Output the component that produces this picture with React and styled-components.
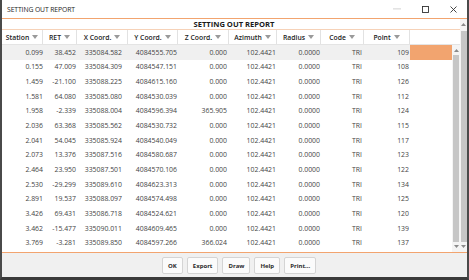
import React from 'react';
import styled, { createGlobalStyle } from 'styled-components';

const GlobalStyle = createGlobalStyle`
  html, body {
    margin: 0;
    padding: 0;
    background: #ffffff;
  }
  * {
    box-sizing: border-box;
  }
`;

const ORANGE = '#f2a46f';

const columns = [
    { key: 'station', label: 'Station', width: 41, pad: 0 },
    { key: 'ret', label: 'RET', width: 34, pad: 1 },
    { key: 'x', label: 'X Coord.', width: 51, pad: 6 },
    { key: 'y', label: 'Y Coord.', width: 50, pad: 1 },
    { key: 'z', label: 'Z Coord.', width: 51, pad: 2 },
    { key: 'az', label: 'Azimuth', width: 48, pad: 1 },
    { key: 'radius', label: 'Radius', width: 44, pad: 1 },
    { key: 'code', label: 'Code', width: 43, pad: 2 },
    { key: 'point', label: 'Point', width: 46, pad: 1 },
];

const raw = [
    ['0.099', '38.452', '335084.582', '4084555.705', '0.000', '109'],
    ['0.155', '47.009', '335084.309', '4084547.151', '0.000', '108'],
    ['1.459', '-21.100', '335088.225', '4084615.160', '0.000', '126'],
    ['1.581', '64.080', '335085.080', '4084530.039', '0.000', '112'],
    ['1.958', '-2.339', '335088.004', '4084596.394', '365.905', '124'],
    ['2.036', '63.368', '335085.562', '4084530.732', '0.000', '115'],
    ['2.041', '54.045', '335085.924', '4084540.049', '0.000', '117'],
    ['2.073', '13.376', '335087.516', '4084580.687', '0.000', '123'],
    ['2.464', '23.950', '335087.501', '4084570.106', '0.000', '122'],
    ['2.530', '-29.299', '335089.610', '4084623.313', '0.000', '134'],
    ['2.891', '19.537', '335088.097', '4084574.498', '0.000', '125'],
    ['3.426', '69.431', '335086.718', '4084524.621', '0.000', '120'],
    ['3.462', '-15.477', '335090.011', '4084609.465', '0.000', '139'],
    ['3.769', '-3.281', '335089.850', '4084597.266', '366.024', '137'],
];

const rows = raw.map(r => ({
    station: r[0],
    ret: r[1],
    x: r[2],
    y: r[3],
    z: r[4],
    az: '102.4421',
    radius: '0.0000',
    code: 'TRI',
    point: r[5],
}));

const Window = styled.div`
  width: 469px;
  height: 280px;
  display: flex;
  flex-direction: column;
  background: #ffffff;
  border-left: 2px solid #4a4a4a;
  border-right: 2px solid #4a4a4a;
  border-bottom: 3px solid #3a3a3a;
  font-family: "Open Sans", "Noto Sans", sans-serif;
  overflow: hidden;
`;

const TitleBar = styled.div`
  height: 18px;
  display: flex;
  align-items: center;
  padding-left: 5px;
  background: #ffffff;
`;

const TitleText = styled.div`
  flex: 1;
  font-size: 6.8px;
  color: #1e1e1e;
  letter-spacing: -0.1px;
`;

const Controls = styled.div`
  display: flex;
  align-items: center;
  height: 100%;
`;

const ControlBtn = styled.div`
  width: 28px;
  height: 100%;
  display: flex;
  align-items: center;
  justify-content: center;
`;

const Panel = styled.div`
  height: 235px;
  display: flex;
  border-top: 1px solid ${ORANGE};
  border-bottom: 1px solid ${ORANGE};
`;

const GridArea = styled.div`
  flex: 1;
  display: flex;
  flex-direction: column;
  min-width: 0;
`;

const Subtitle = styled.div`
  height: 10px;
  font-size: 7.6px;
  font-weight: 700;
  color: #1a1a1a;
  text-align: center;
  line-height: 10px;
  padding-left: 6px;
`;

const HeaderRow = styled.div`
  height: 16px;
  display: flex;
  border-top: 1px solid #f6d2b8;
  border-bottom: 1px solid #e4e4e4;
`;

const HeaderCell = styled.div`
  flex: 0 0 ${p => p.$w}px;
  display: flex;
  align-items: center;
  justify-content: center;
  gap: 3px;
  font-size: 6.8px;
  font-weight: 600;
  color: #222;
  border-right: 1px solid #e2e2e2;
  &:last-child {
    flex: 1;
    border-right: none;
  }
`;

const BodyArea = styled.div`
  flex: 1;
  display: flex;
  min-height: 0;
`;

const Rows = styled.div`
  flex: 1;
  overflow: hidden;
`;

const Row = styled.div`
  height: 14.65px;
  display: flex;
  align-items: center;
  background: ${p => (p.$selected ? '#f0f0f0' : '#ffffff')};
`;

const Cell = styled.div`
  flex: 0 0 ${p => p.$w}px;
  text-align: right;
  padding-right: ${p => p.$pad}px;
  font-size: 6.9px;
  color: #444;
  white-space: nowrap;
`;

const FillCell = styled.div`
  flex: 1;
  align-self: stretch;
  background: ${p => (p.$selected ? ORANGE : 'transparent')};
`;

const ScrollBar = styled.div`
  flex: 0 0 ${p => p.$w}px;
  display: flex;
  flex-direction: column;
  align-items: center;
  background: #f4f4f4;
  padding: 2px 0;
`;

const Arrow = styled.div`
  height: 7px;
  display: flex;
  align-items: center;
  justify-content: center;
`;

const Thumb = styled.div`
  flex: 1;
  width: 6px;
  background: #c6c6c6;
  margin: ${p => p.$m};
`;

const ButtonBar = styled.div`
  flex: 1;
  display: flex;
  justify-content: center;
  align-items: flex-start;
  gap: 4px;
  padding: 4px 0 0 9px;
  background: #f0f0f0;
`;

const Button = styled.button`
  height: 17px;
  padding: 0 5px;
  min-width: 21px;
  font-family: "Open Sans", "Noto Sans", sans-serif;
  font-size: 6px;
  font-weight: 700;
  color: #2a2a2a;
  background: #fbfbfb;
  border: 1px solid #d4d4d4;
  border-radius: 2px;
`;

const SortIcon = () => (
    <svg width="6" height="4" viewBox="0 0 6 4">
        <polygon points="0,0 6,0 3,4" fill="#9a9a9a" />
    </svg>
);

const UpArrow = () => (
    <svg width="5" height="3" viewBox="0 0 5 3">
        <polygon points="0,3 5,3 2.5,0" fill="#8a8a8a" />
    </svg>
);

const DownArrow = () => (
    <svg width="5" height="3" viewBox="0 0 5 3">
        <polygon points="0,0 5,0 2.5,3" fill="#8a8a8a" />
    </svg>
);

export default function App() {
    return (
        <>
            <GlobalStyle />
            <Window>
                <TitleBar>
                    <TitleText>SETTING OUT REPORT</TitleText>
                    <Controls>
                        <ControlBtn>
                            <svg width="8" height="2" viewBox="0 0 8 2">
                                <rect x="0" y="0.5" width="8" height="0.8" fill="#c8c8c8" />
                            </svg>
                        </ControlBtn>
                        <ControlBtn>
                            <svg width="7" height="7" viewBox="0 0 7 7">
                                <rect x="0.5" y="0.5" width="6" height="6" fill="none" stroke="#333" strokeWidth="0.9" />
                            </svg>
                        </ControlBtn>
                        <ControlBtn>
                            <svg width="7" height="7" viewBox="0 0 7 7">
                                <path d="M0.5 0.5 L6.5 6.5 M6.5 0.5 L0.5 6.5" stroke="#333" strokeWidth="0.9" />
                            </svg>
                        </ControlBtn>
                    </Controls>
                </TitleBar>

                <Panel>
                    <GridArea>
                        <Subtitle>SETTING OUT REPORT</Subtitle>
                        <HeaderRow>
                            {columns.map(c => (
                                <HeaderCell key={c.key} $w={c.width}>
                                    {c.label}
                                    <SortIcon />
                                </HeaderCell>
                            ))}
                            <HeaderCell />
                        </HeaderRow>
                        <BodyArea>
                            <Rows>
                                {rows.map((r, i) => (
                                    <Row key={i} $selected={i === 0}>
                                        {columns.map(c => (
                                            <Cell key={c.key} $w={c.width} $pad={c.pad}>
                                                {r[c.key]}
                                            </Cell>
                                        ))}
                                        <FillCell $selected={i === 0} />
                                    </Row>
                                ))}
                            </Rows>
                            <ScrollBar $w={8}>
                                <Arrow><UpArrow /></Arrow>
                                <Thumb $m="1px 0" />
                                <Arrow><DownArrow /></Arrow>
                            </ScrollBar>
                        </BodyArea>
                    </GridArea>
                    <ScrollBar $w={7}>
                        <Arrow><UpArrow /></Arrow>
                        <Thumb $m="3px 0 1px" />
                        <Arrow><DownArrow /></Arrow>
                    </ScrollBar>
                </Panel>

                <ButtonBar>
                    <Button>OK</Button>
                    <Button>Export</Button>
                    <Button>Draw</Button>
                    <Button>Help</Button>
                    <Button>Print...</Button>
                </ButtonBar>
            </Window>
        </>
    );
}
